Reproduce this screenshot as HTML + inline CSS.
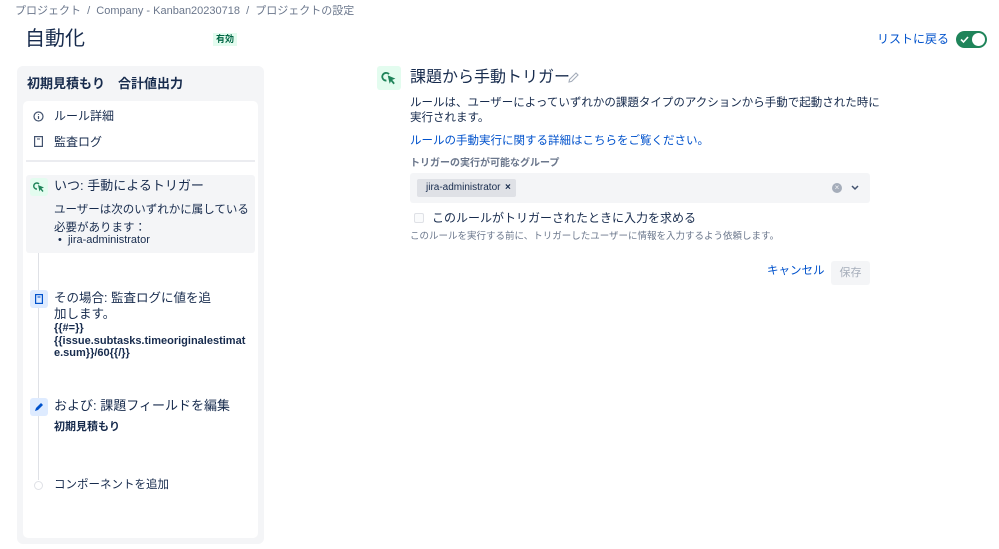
<!DOCTYPE html>
<html><head><meta charset="utf-8"><style>
*{margin:0;padding:0;box-sizing:border-box}
body{width:999px;height:549px;background:#fff;font-family:"Liberation Sans","Noto Sans CJK JP",sans-serif;color:#172b4d;position:relative;overflow:hidden}
.a{position:absolute;white-space:nowrap;line-height:1}
</style></head><body>
<div class="a" style="left:15px;top:6px;font-size:11px;color:#6b778c">プロジェクト &nbsp;/ &nbsp;Company - Kanban20230718 &nbsp;/ &nbsp;プロジェクトの設定</div>
<div class="a" style="left:25px;top:29px;font-size:20px">自動化</div>
<div class="a" style="left:213px;top:33px;padding:2px 3px;background:#e3fcef;color:#006644;font-size:9px;font-weight:bold">有効</div>
<div class="a" style="left:877px;top:33px;font-size:12px;color:#0052cc">リストに戻る</div>
<div class="a" style="left:956px;top:31px;width:31px;height:17px;border-radius:9px;background:#1f845a"><div style="position:absolute;right:2px;top:2px;width:13px;height:13px;border-radius:50%;background:#fff"></div><svg style="position:absolute;left:4px;top:4px" width="9" height="9" viewBox="0 0 9 9"><path d="M1 4.5L3.5 7L8 2" stroke="#fff" stroke-width="1.6" fill="none"/></svg></div>

<div class="a" style="left:17px;top:66px;width:247px;height:478px;background:#f4f5f7;border-radius:6px"></div>
<div class="a" style="left:27px;top:77px;font-size:13px;font-weight:bold">初期見積もり　合計値出力</div>
<div class="a" style="left:23px;top:101px;width:235px;height:437px;background:#fff;border-radius:5px"></div>
<svg class="a" style="left:33px;top:111px" width="11" height="11"><circle cx="5.5" cy="5.5" r="4.5" stroke="#42526e" stroke-width="1.2" fill="none"/><path d="M5.5 5v3M5.5 3v.8" stroke="#42526e" stroke-width="1.2"/></svg>
<div class="a" style="left:54px;top:110px;font-size:12px">ルール詳細</div>
<svg class="a" style="left:34px;top:136px" width="9" height="11"><rect x=".6" y=".6" width="7.8" height="9.8" stroke="#42526e" stroke-width="1.2" fill="none"/><path d="M3 3h3" stroke="#42526e"/></svg>
<div class="a" style="left:54px;top:136px;font-size:12px">監査ログ</div>
<div class="a" style="left:26px;top:160px;width:229px;height:2px;background:#ebecf0"></div>
<div class="a" style="left:38px;top:195px;width:1px;height:285px;background:#dfe1e6"></div>
<div class="a" style="left:26px;top:175px;width:229px;height:78px;background:#f4f5f7;border-radius:3px"></div>
<div class="a" style="left:30px;top:178px;width:18px;height:18px;background:#e3fcef;border-radius:3px"></div>
<svg class="a" style="left:32px;top:180px" width="14" height="14" viewBox="0 0 14 14"><path d="M5 9A3 3 0 1 1 7 4" stroke="#1f845a" stroke-width="1.4" fill="none"/><path d="M6 5l6 2.5-2.5 1 2 2.5-1 1-2-2.5-1 2z" fill="#1f845a"/></svg>
<div class="a" style="left:54px;top:179px;font-size:13px">いつ: 手動によるトリガー</div>
<div class="a" style="left:54px;top:201px;font-size:11.5px;line-height:18px;white-space:normal;width:200px">ユーザーは次のいずれかに属している必要があります：</div>
<div class="a" style="left:58px;top:235px;font-size:11px">•&nbsp; jira-administrator</div>
<div class="a" style="left:30px;top:290px;width:18px;height:18px;background:#deebff;border-radius:3px"></div>
<svg class="a" style="left:35px;top:294px" width="8" height="10"><rect x=".6" y=".6" width="6.8" height="8.8" stroke="#0052cc" stroke-width="1.2" fill="none"/><path d="M2.5 3h3" stroke="#0052cc"/></svg>
<div class="a" style="left:54px;top:290px;font-size:12.5px;line-height:16px;white-space:normal;width:160px">その場合: 監査ログに値を追加します。</div>
<div class="a" style="left:54px;top:322px;font-size:11px;font-weight:bold;line-height:12.5px;white-space:normal;width:196px;word-break:break-all">{{#=}}<br>{{issue.subtasks.timeoriginalestimate.sum}}/60{{/}}</div>
<div class="a" style="left:30px;top:398px;width:18px;height:18px;background:#deebff;border-radius:3px"></div>
<svg class="a" style="left:33px;top:401px" width="12" height="12" viewBox="0 0 12 12"><path d="M2 10l1-3 5-5 2 2-5 5z" fill="#0052cc"/></svg>
<div class="a" style="left:54px;top:399px;font-size:13px">および: 課題フィールドを編集</div>
<div class="a" style="left:54px;top:422px;font-size:11px;font-weight:bold">初期見積もり</div>
<div class="a" style="left:34px;top:481px;width:9px;height:9px;border-radius:50%;border:1.5px solid #dfe1e6;background:#fff"></div>
<div class="a" style="left:54px;top:480px;font-size:11.5px">コンポーネントを追加</div>

<div class="a" style="left:377px;top:66px;width:24px;height:24px;background:#e3fcef;border-radius:3px"></div>
<svg class="a" style="left:380px;top:69px" width="18" height="18" viewBox="0 0 14 14"><path d="M5 9A3 3 0 1 1 7 4" stroke="#1f845a" stroke-width="1.4" fill="none"/><path d="M6 5l6 2.5-2.5 1 2 2.5-1 1-2-2.5-1 2z" fill="#1f845a"/></svg>
<div class="a" style="left:410px;top:70px;font-size:16px">課題から手動トリガー</div>
<svg class="a" style="left:567px;top:71px" width="13" height="13" viewBox="0 0 13 13"><path d="M2 11l.6-2.6L9 2l2 2-6.4 6.4z" stroke="#a5adba" stroke-width="1.1" fill="none"/></svg>
<div class="a" style="left:410px;top:96px;font-size:11.5px;line-height:15px;white-space:normal;width:470px">ルールは、ユーザーによっていずれかの課題タイプのアクションから手動で起動された時に実行されます。</div>
<div class="a" style="left:410px;top:136px;font-size:11.5px;color:#0052cc">ルールの手動実行に関する詳細はこちらをご覧ください。</div>
<div class="a" style="left:410px;top:159px;font-size:10px;font-weight:bold;color:#6b778c">トリガーの実行が可能なグループ</div>
<div class="a" style="left:410px;top:173px;width:460px;height:30px;background:#f4f5f7;border-radius:3px"></div>
<div class="a" style="left:417px;top:179px;width:99px;height:18px;background:#dfe1e6;border-radius:2px"></div>
<div class="a" style="left:426px;top:183px;font-size:10px">jira-administrator</div>
<div class="a" style="left:505px;top:183px;font-size:10px;font-weight:bold">×</div>
<div class="a" style="left:832px;top:183px;width:10px;height:10px;border-radius:50%;background:#a5adba;color:#f4f5f7;font-size:8px;text-align:center;line-height:10px">×</div>
<svg class="a" style="left:851px;top:185px" width="8" height="6"><path d="M1 1l3 3 3-3" stroke="#42526e" stroke-width="1.5" fill="none"/></svg>
<div class="a" style="left:414px;top:213px;width:10px;height:10px;border:1.5px solid #dfe1e6;border-radius:2px;background:#fafbfc"></div>
<div class="a" style="left:432px;top:212px;font-size:12px">このルールがトリガーされたときに入力を求める</div>
<div class="a" style="left:410px;top:232px;font-size:9.5px;color:#6b778c">このルールを実行する前に、トリガーしたユーザーに情報を入力するよう依頼します。</div>
<div class="a" style="left:767px;top:266px;font-size:11.5px;color:#0052cc">キャンセル</div>
<div class="a" style="left:831px;top:261px;width:39px;height:24px;background:#f4f5f7;border-radius:3px;color:#a5adba;font-size:11px;text-align:center;line-height:24px">保存</div>
</body></html>
